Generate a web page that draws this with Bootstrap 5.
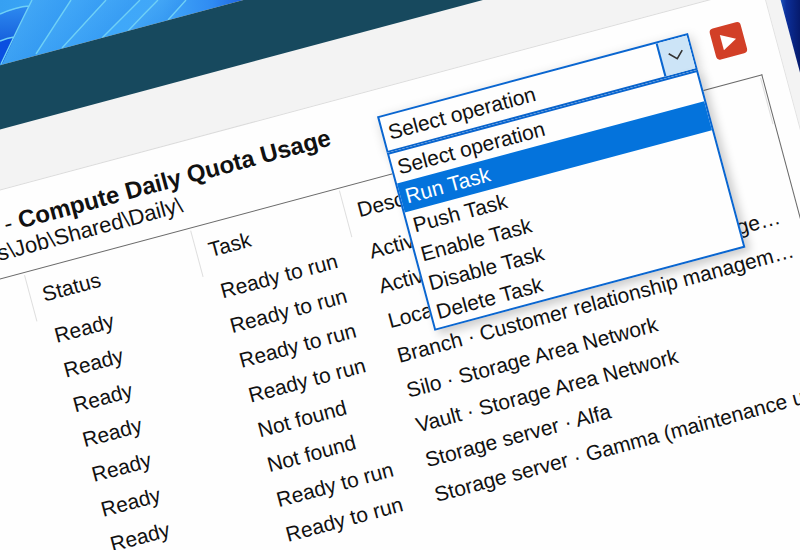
<!DOCTYPE html>
<html lang="en">
<head>
<meta charset="utf-8">
<meta name="viewport" content="width=device-width, initial-scale=1">
<title>Compute Daily Quota Usage</title>
<link href="https://cdn.jsdelivr.net/npm/bootstrap@5.3.0/dist/css/bootstrap.min.css" rel="stylesheet">
<style>
:root { --accent: #0a66d0; --ink: #111; }
body { background: #0a2a8c; color: var(--ink); font-family: "Liberation Sans", Arial, sans-serif; font-size: 21px; line-height: 36px; }
.wallpaper { z-index: 0; }
.stage { z-index: 1; margin-left: -160px; width: calc(100vw + 114px); padding-top: 63px; transform: rotate(-15deg); transform-origin: 160px 0; }
.app-window { background: #f3f3f3; min-height: 720px; padding-right: 14px; }
.titlebar { background: #17495e; height: 62px; margin-right: -14px; }
.toolstrip { height: 58px; }
.panel { background: #fefefe; border-top: 1px solid #dcdcdc; border-right: 1px solid #e2e2e2; min-height: 600px; padding: 20px 22px 0 0; }
.heading { padding: 0 10px 11px 92px; font-size: 22px; line-height: 27px; }
.heading h1 { font-size: 24px; line-height: 27px; padding-left: 14px; }
.controls { gap: 21px; padding-top: 6px; }
.op-box { width: 322px; height: 38px; border: 2px solid var(--accent); background: #fefefe; box-shadow: 2px 4px 12px #0003; }
.op-box select { border: 0; background: transparent; appearance: none; padding: 0 0 0 5px; color: var(--ink); line-height: 34px; outline: 0; }
.op-arrow { width: 32px; border-left: 2px solid var(--accent); background: #cce4f7; }
.op-menu { top: 36px; left: -2px; right: -2px; border: 2px solid var(--accent); background: #fefefe; z-index: 5; box-shadow: 4px 5px 10px #0003; }
.op-menu button { height: 30px; line-height: 30px; padding: 0 5px; border: 0; background: transparent; color: var(--ink); }
.op-menu button.chosen { background: #0473dc; color: #fff; }
.run-btn { width: 32px; height: 32px; border: 0; border-radius: 4px; background: #d23f27; margin-top: 2px; }
.grid-frame { border: 1px solid #6a6a6a; border-left: 0; border-bottom: 0; min-height: 500px; }
.jobs { table-layout: fixed; }
.jobs th { font-weight: 400; padding: 8px 0 7px 13px; background: linear-gradient(#dedede, #dedede) 0 2px / 1px 48px no-repeat; }
.jobs td { padding: 0 0 0 14px; white-space: nowrap; }
.c-name { width: 112px; } .c-status { width: 172px; } .c-task { width: 154px; } .c-desc { width: 436px; }
</style>
</head>
<body class="position-relative overflow-hidden vh-100">
<svg class="wallpaper position-absolute top-0 start-0 w-100 h-100" viewBox="0 0 800 550" preserveAspectRatio="none" aria-hidden="true">
  <defs>
    <linearGradient id="sky" gradientUnits="userSpaceOnUse" x1="0" y1="0" x2="250" y2="0"><stop offset="0" stop-color="#36a0f2"/><stop offset=".3" stop-color="#3da9fa"/><stop offset=".65" stop-color="#41a7f8"/><stop offset=".85" stop-color="#2f8bf2"/><stop offset="1" stop-color="#1c5ee0"/></linearGradient>
    <linearGradient id="blade" x1="0" y1="0" x2="1" y2=".6"><stop offset="0" stop-color="#5abafb" stop-opacity=".6"/><stop offset="1" stop-color="#2284ea" stop-opacity=".5"/></linearGradient>
    <linearGradient id="deep" x1="0" y1="0" x2="0" y2="1"><stop offset="0" stop-color="#2d8af0"/><stop offset="1" stop-color="#0846d0"/></linearGradient>
    <linearGradient id="edge" x1="0" y1="0" x2="1" y2="0"><stop offset="0" stop-color="#2a78dc"/><stop offset=".45" stop-color="#0c2f9a"/><stop offset="1" stop-color="#061a6c"/></linearGradient>
  </defs>
  <path d="M0 0H300V80H0Z" fill="url(#sky)"/>
  <g fill="url(#blade)">
    <path d="M32 0H71L36 56L2 64Z"/><path d="M71 0H106L62 48L36 56Z"/><path d="M106 0H140L102 38L62 48Z"/><path d="M158 0H186L168 20L128 31Z"/>
  </g>
  <path d="M0 14Q16 8 29 6L3 62L0 64Z" fill="url(#deep)"/>
  <path d="M0 42Q8 38 14 38L2 64H0Z" fill="#0a4fe0"/>
  <g fill="none" stroke="#6fd0f6" stroke-width="1.4">
    <path d="M0 14Q16 7 29 6M0 41Q7 38 14 37M32 0Q18 28 1 64M71 0Q54 26 36 54M106 0Q84 24 62 48M140 0Q120 20 102 38M158 0Q143 15 128 31M186 0L168 20"/>
  </g>
  <path d="M775 0H800V90Z" fill="url(#edge)"/>
</svg>
<div class="stage position-relative">
  <main class="app-window">
    <div class="titlebar"></div>
    <div class="toolstrip"></div>
    <section class="panel">
      <div class="d-flex justify-content-between align-items-start pe-2">
        <div class="heading text-nowrap">
          <h1 class="m-0 fw-bold"><span class="fw-normal">-</span> Compute Daily Quota Usage</h1>
          <div>s\Job\Shared\Daily\</div>
        </div>
        <div class="controls d-flex">
          <div class="op-box d-flex position-relative">
            <select class="flex-grow-1" aria-label="Operation"><option>Select operation</option><option>Run Task</option><option>Push Task</option><option>Enable Task</option><option>Disable Task</option><option>Delete Task</option></select>
            <span class="op-arrow d-flex align-items-center justify-content-center"><svg width="18" height="10" viewBox="0 0 18 10" fill="none" stroke="#333" stroke-width="1.6" aria-hidden="true"><path d="M2 1L9 8L16 1"/></svg></span>
            <div class="op-menu position-absolute d-flex flex-column" role="group" aria-label="Operations">
              <button type="button" class="text-start">Select operation</button>
              <button type="button" class="text-start chosen">Run Task</button>
              <button type="button" class="text-start">Push Task</button>
              <button type="button" class="text-start">Enable Task</button>
              <button type="button" class="text-start">Disable Task</button>
              <button type="button" class="text-start">Delete Task</button>
            </div>
          </div>
          <button type="button" class="run-btn d-flex align-items-center justify-content-center p-0" aria-label="Run"><svg width="18" height="18" viewBox="0 0 16 16" fill="#fff" aria-hidden="true"><path d="M2 1L15 8L2 15Z"/></svg></button>
        </div>
      </div>
      <div class="grid-frame">
        <table class="jobs w-100">
          <colgroup><col class="c-name"><col class="c-status"><col class="c-task"><col class="c-desc"><col></colgroup>
          <thead><tr><td></td><th scope="col">Status</th><th scope="col">Task</th><th scope="col">Description</th><th></th></tr></thead>
          <tbody>
            <tr><td></td><td>Ready</td><td>Ready to run</td><td>Active Directory</td></tr>
            <tr><td></td><td>Ready</td><td>Ready to run</td><td>Active Directory</td></tr>
            <tr><td></td><td>Ready</td><td>Ready to run</td><td>Location · Customer relationship manage…</td></tr>
            <tr><td></td><td>Ready</td><td>Ready to run</td><td>Branch · Customer relationship managem…</td></tr>
            <tr><td></td><td>Ready</td><td>Not found</td><td>Silo · Storage Area Network</td></tr>
            <tr><td></td><td>Ready</td><td>Not found</td><td>Vault · Storage Area Network</td></tr>
            <tr><td></td><td>Ready</td><td>Ready to run</td><td>Storage server · Alfa</td></tr>
            <tr><td></td><td>Ready</td><td>Ready to run</td><td>Storage server · Gamma (maintenance unit)</td></tr>
          </tbody>
        </table>
      </div>
    </section>
  </main>
</div>
<script src="https://cdn.jsdelivr.net/npm/bootstrap@5.3.0/dist/js/bootstrap.bundle.min.js"></script>
</body>
</html>
